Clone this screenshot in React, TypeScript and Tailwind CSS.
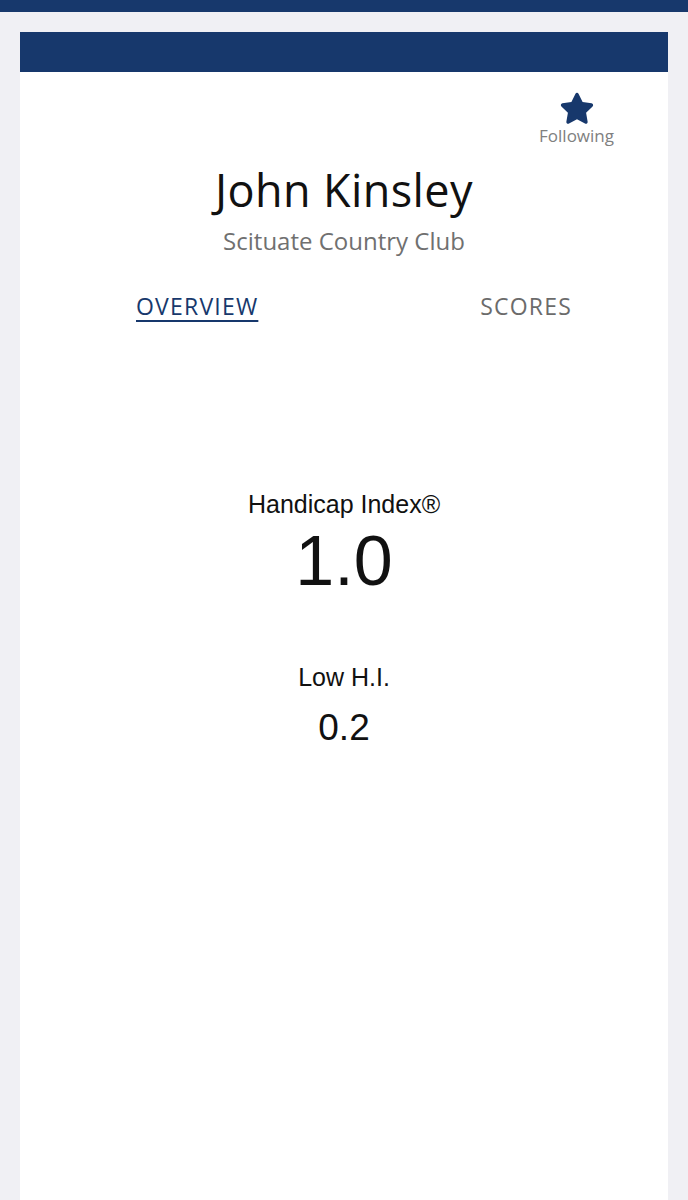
export default function App() {
  return (
    <div className="min-h-[1200px] bg-[#f0f0f4] font-['Open_Sans',sans-serif]">
      <div className="h-[12px] bg-[#17386c]" />
      <div className="mx-[20px] mt-[20px] min-h-[1168px] bg-white">
        <div className="h-[40px] bg-[#17386c]" />

        {/* follow toggle */}
        <div className="flex justify-end pr-[54px] pt-[18px]">
          <div className="flex flex-col items-center">
            <svg width="40" height="38" viewBox="0 0 24 24" fill="#17386c">
              <path d="M12 1.8c.45 0 .85.26 1.04.67l2.5 5.16 5.66.8c.95.13 1.33 1.3.64 1.97l-4.1 3.97.98 5.62c.16.94-.83 1.66-1.68 1.21L12 18.52l-5.04 2.68c-.85.45-1.840-.27-1.68-1.21l.98-5.62-4.1-3.97c-.69-.67-.31-1.84.64-1.97l5.66-.8 2.5-5.16c.19-.41.59-.67 1.04-.67z" />
            </svg>
            <span className="mt-[-2px] text-[17px] leading-[20px] text-[#808080]">Following</span>
          </div>
        </div>

        <div className="mt-[19px] text-center">
          <h1 className="text-[45px] leading-[50px] tracking-[0.4px] text-[#111111]">John Kinsley</h1>
          <p className="mt-[12px] text-[24px] leading-[28px] text-[#707070]">Scituate Country Club</p>
        </div>

        {/* tabs */}
        <div className="mt-[37px] flex justify-between pl-[116px] pr-[96px]">
          <span className="text-[23px] leading-[28px] tracking-[1.2px] text-[#17386c] underline underline-offset-[5px] decoration-[2px]">
            OVERVIEW
          </span>
          <span className="text-[23px] leading-[28px] tracking-[1.2px] text-[#6b6b6b]">SCORES</span>
        </div>

        <div className="mt-[169px] text-center font-['Liberation_Sans',Arial,sans-serif] text-[#111111]">
          <div className="text-[25px] leading-[30px]">Handicap Index®</div>
          <div className="mt-[4px] text-[70px] leading-[76px]">1.0</div>
          <div className="mt-[63px] text-[25px] leading-[30px]">Low H.I.</div>
          <div className="mt-[14px] text-[37px] leading-[44px]">0.2</div>
        </div>
      </div>
    </div>
  );
}
